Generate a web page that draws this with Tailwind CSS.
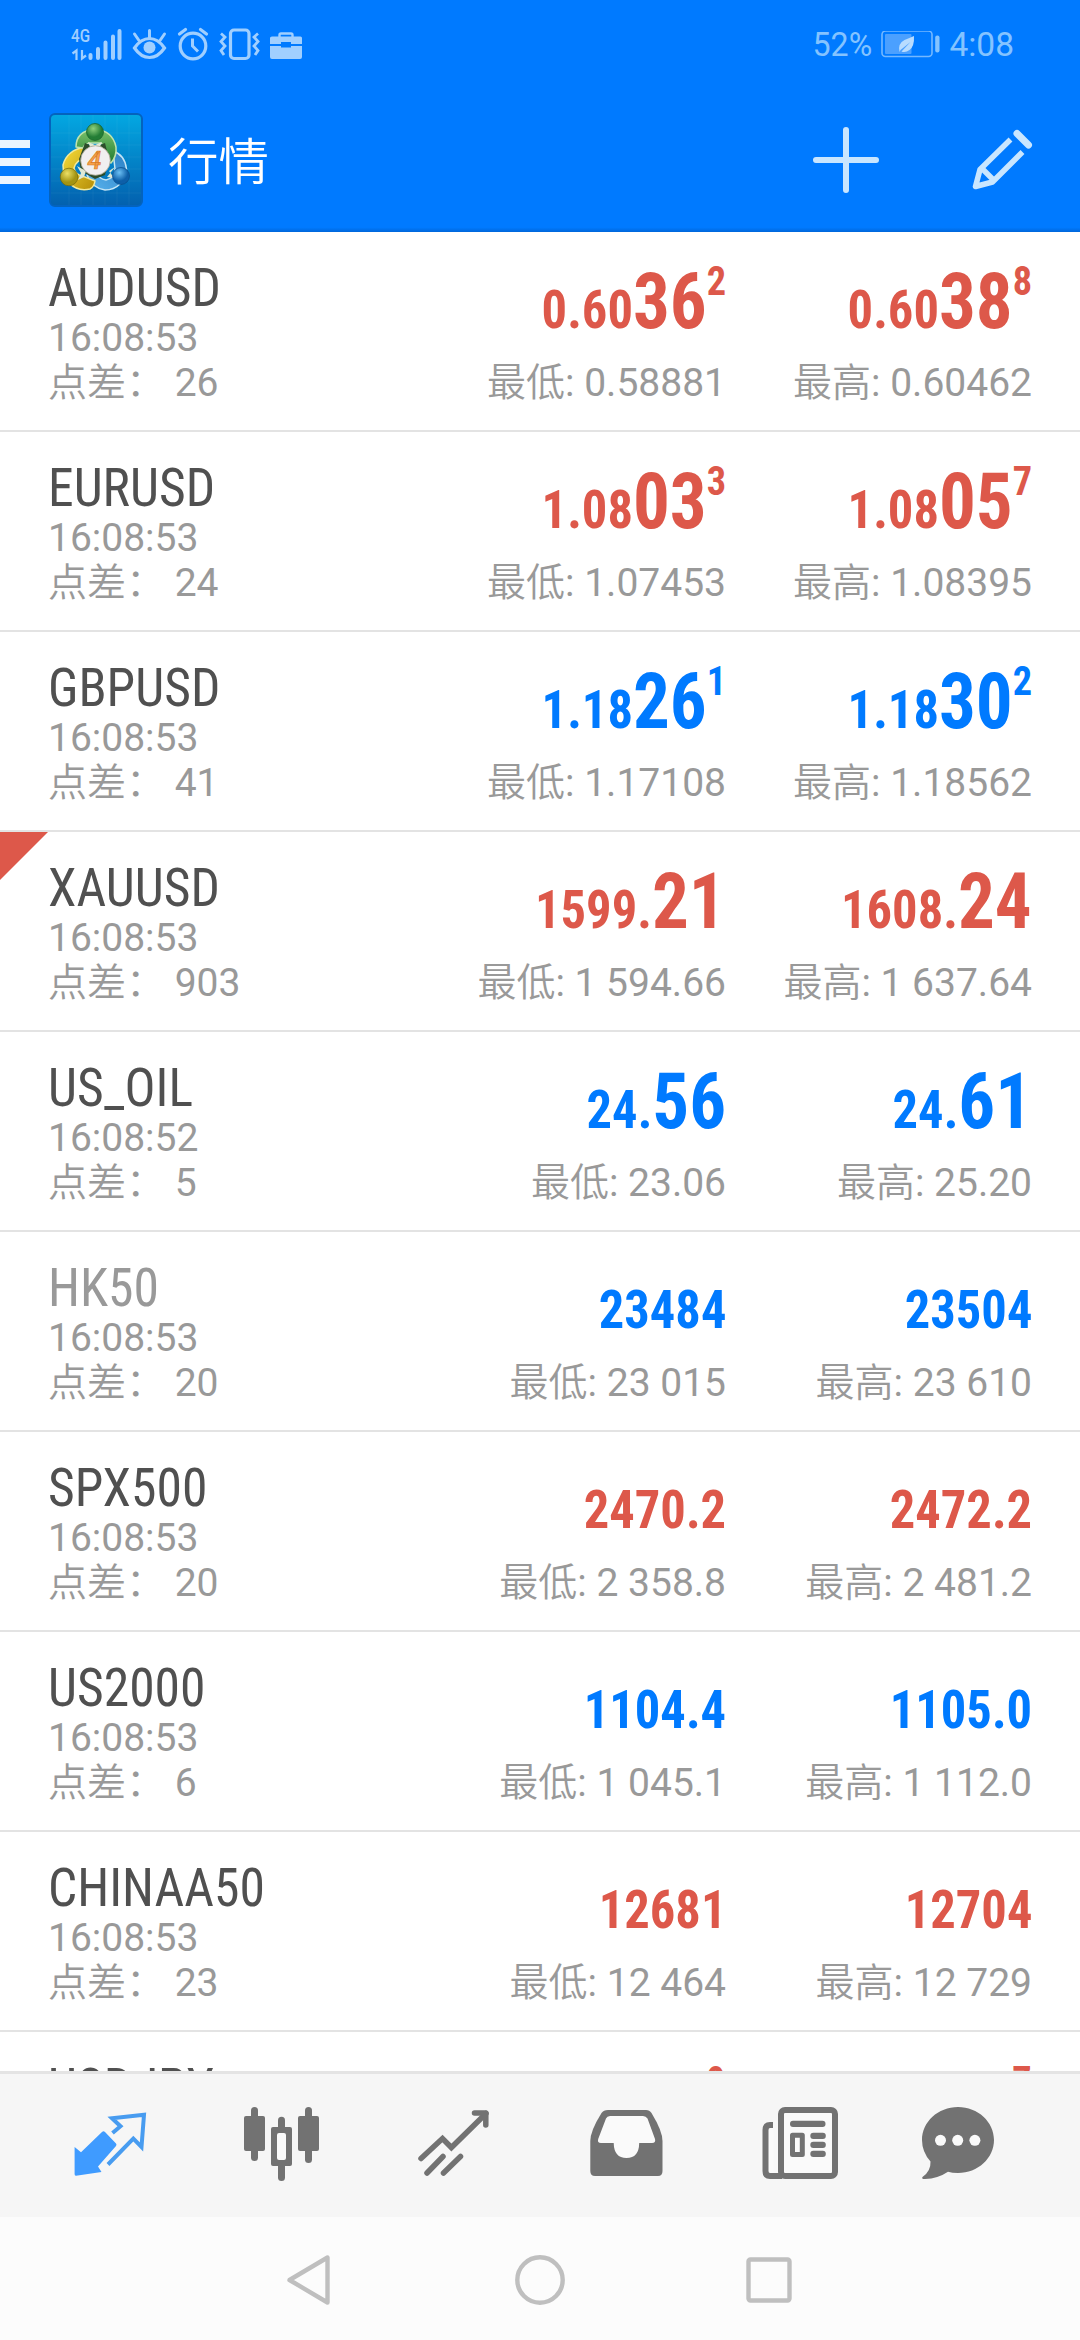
<!DOCTYPE html>
<html lang="zh-CN">
<head>
<meta charset="utf-8">
<meta name="viewport" content="width=1080">
<title>行情</title>
<script src="https://cdn.jsdelivr.net/npm/@tailwindcss/browser@4"></script>
</head>
<body class="flex h-[2340px] w-[1080px] flex-col overflow-hidden bg-white font-['Roboto','Noto_Sans_CJK_SC',sans-serif]">

<header class="flex h-[232px] shrink-0 flex-col bg-[#007aff] bg-linear-to-b from-[#007aff] from-98% to-[#0067da]">
  <div class="flex h-[90px] items-center justify-between pr-[66px] pl-[70px]">
    <svg class="h-[40px] w-[240px]" viewBox="70 25 240 40" fill="none" stroke="#a0cfff">
      <text x="71" y="42" font-family="Roboto" font-size="19" font-weight="500" fill="#a0cfff" stroke="none" textLength="19" lengthAdjust="spacingAndGlyphs">4G</text>
      <path d="M72.500 53.500L76.500 50.500V60M82 50V58.500L86 55.500" stroke-width="2.200"/>
      <path d="M90.500 55V58M98 49V58M105.500 42.500V58M113 36.500V58M119.500 31V58" stroke-width="4" stroke-linecap="round"/>
      <path d="M134.500 48Q141 38.500 149.500 38.500T164.500 48Q158 57.500 149.500 57.500T134.500 48Z" stroke-width="3.200"/>
      <circle cx="149.500" cy="47.500" r="6" fill="#a0cfff" stroke="none"/>
      <path d="M149.500 38V30.500M139 40.500L134.500 34M160 40.500L164.500 34" stroke-width="3" stroke-linecap="round"/>
      <circle cx="193" cy="46" r="12.800" stroke-width="3.200"/>
      <path d="M192.500 38.500V46L198 51.500" stroke-width="3"/>
      <path d="M179.500 34L185.500 29.500M206.500 34L200.500 29.500" stroke-width="3.200" stroke-linecap="round"/>
      <rect x="230.500" y="30" width="18.500" height="28.500" rx="3.500" stroke-width="3.200"/>
      <path d="M221 33.500L225 37L221 41.500L225 46L221 50.500L224 55M258 33.500L254 37L258 41.500L254 46L258 50.500L255 55" stroke-width="2.800"/>
      <path d="M272 36.500H300.500Q302 36.500 302 38V44H291V42H281V44H270V38Q270 36.500 272 36.500ZM270 46H281V47.500H291V46H302V57Q302 59 300 59H272Q270 59 270 57Z" fill="#a0cfff" stroke="none"/>
      <path d="M279.500 37V35Q279.500 33.500 281 33.500H291Q292.500 33.500 292.500 35V37" stroke-width="2.400"/>
    </svg>
    <div class="flex items-center gap-[9px] text-[33.500px] leading-none text-[#84c3ff]">
      <span class="origin-right scale-x-[.96]">52%</span>
      <svg class="h-[28px] w-[59px]" viewBox="880.500 31.500 59 28">
        <rect x="881.500" y="31.500" width="50" height="25.500" rx="3.500" fill="none" stroke="#74b8ff" stroke-width="1.600"/>
        <rect x="884.500" y="34.500" width="26.500" height="20" rx="1" fill="#4ba0ff"/>
        <rect x="934.700" y="36" width="4.300" height="17" rx="2" fill="#84c3ff"/>
        <path d="M899 52.500Q897 44 904 40.500Q909 38.500 913.500 36.500Q914 47 909 50.500Q905 53.500 901 52L910 42.500L900 50.500Z" fill="#b8dcff"/>
      </svg>
      <span>4:08</span>
    </div>
  </div>
  <div class="flex h-[140px] items-center pr-[46px]">
    <div class="flex w-[30px] flex-col gap-[10px] pt-1">
      <i class="h-2 bg-[#eaf5ff]"></i><i class="h-2 bg-[#eaf5ff]"></i><i class="h-2 bg-[#eaf5ff]"></i>
    </div>
    <svg class="ml-[19px] h-[94px] w-[94px]" viewBox="0 0 94 94">
      <defs>
        <linearGradient id="bg" x1="0" y1="0" x2="0" y2="1"><stop offset="0" stop-color="#03a8e2"/><stop offset="1" stop-color="#0360ae"/></linearGradient>
        <linearGradient id="gr" x1="0" y1="0" x2="0" y2="1"><stop offset="0" stop-color="#7cc46c"/><stop offset="1" stop-color="#1f7a30"/></linearGradient>
        <linearGradient id="ye" x1="0" y1="0" x2="1" y2="1"><stop offset="0" stop-color="#f6dd3a"/><stop offset="1" stop-color="#b58d08"/></linearGradient>
        <linearGradient id="bl" x1="1" y1="0" x2="0" y2="1"><stop offset="0" stop-color="#2b7fc4"/><stop offset="1" stop-color="#5ab4ee"/></linearGradient>
        <radialGradient id="hg" cx=".4" cy=".3"><stop offset="0" stop-color="#8ed07c"/><stop offset="1" stop-color="#237d35"/></radialGradient>
        <radialGradient id="hy" cx=".4" cy=".3"><stop offset="0" stop-color="#ece066"/><stop offset="1" stop-color="#a39412"/></radialGradient>
        <radialGradient id="hb" cx=".4" cy=".3"><stop offset="0" stop-color="#6cc0f4"/><stop offset="1" stop-color="#0d5fa8"/></radialGradient>
      </defs>
      <rect x="1" y="1" width="92" height="92" rx="5" fill="url(#bg)" stroke="#0463bd" stroke-width="2"/>
      <path d="M20 2V92M32 2V92M44 2V92M56 2V92M68 2V92M80 2V92M2 20H92M2 32H92M2 44H92M2 56H92M2 68H92M2 80H92" stroke="#fff" stroke-opacity=".05"/>
      <g stroke-linejoin="round">
      <path d="M64 38Q76 42 77.500 56Q77 64 71 71Q65 77 56 77Q43 75 38 62L46 58Q50 66 57 67Q66 65 66 56Z" fill="url(#bl)" stroke="#c3e4f5" stroke-width="1.500"/>
      <path d="M36 34Q18 37 14 52Q14 63 20 70Q29 79 41 76Q45 74 46 68L36 64Q26 62 25 55Q27 47 37 45Z" fill="url(#ye)" stroke="#f3e99a" stroke-width="1.500"/>
      <path d="M27 34Q27 18 46 16Q64 18 67 34Q68 43 62 50L55 46Q58 34 52 30H40Q35 32 34 35Z" fill="url(#gr)" stroke="#bfe3ae" stroke-width="1.500"/>
      <path d="M36 30L46 34L56 30L60 46L56 62L46 66L32 58L30 46Z" fill="#2c4d2a"/>
      <path d="M39 29L46 32L53 29L50 36H42ZM28 53L32 60L29 67L35 64L37 58ZM66 54L60 58L65 65L58 64Z" fill="#dfe9d5"/>
      </g>
      <circle cx="46" cy="19" r="8.500" fill="url(#hg)" stroke="#155f28" stroke-width=".7"/>
      <circle cx="20" cy="64" r="8.800" fill="url(#hy)" stroke="#72680d" stroke-width=".7"/>
      <circle cx="72" cy="63" r="8.500" fill="url(#hb)" stroke="#084a88" stroke-width=".7"/>
      <circle cx="46.500" cy="47.500" r="14.800" fill="#f1eff0" stroke="#a9a58f" stroke-width=".8"/>
      <text x="45.500" y="56" text-anchor="middle" font-family="Roboto" font-size="25" font-weight="500" font-style="italic" fill="#f6a24b" stroke="#d97a25" stroke-width=".7">4</text>
    </svg>
    <h1 class="ml-[25px] pt-[7px] text-[50.500px] leading-none font-[350] text-white">行情</h1>
    <svg class="ml-auto h-[70px] w-[224px]" viewBox="810 125 224 70" fill="none" stroke="#c9e6ff">
      <path d="M846 130V190M816 160H876" stroke-width="6" stroke-linecap="round"/>
      <g stroke-width="5.500">
        <path d="M1010.500 139.500L980 169.500L975.500 186.500L992.500 182L1022.500 152" stroke-linejoin="round"/>
        <path d="M981 167.500L995 181.500"/>
        <path d="M1017 133.500L1028.500 145" stroke-width="7" stroke-linecap="round"/>
      </g>
    </svg>
  </div>
</header>

<main id="quotes" class="h-[1839px] shrink-0 overflow-hidden"></main>

<nav class="flex h-[146px] shrink-0 items-start gap-[72px] border-t-[3px] border-[#e4e4e4] bg-[#f6f6f6] pt-[20px] pl-[60px]">
  <svg class="size-[100px] shrink-0" viewBox="0 0 100 100">
    <path d="M14.600 53L21 58.300L42 38Q43.500 36.500 45 38L56 49.500Q57 50.500 56 52L38 72.500L41.500 78L16 81.800Q14.600 82 14.600 80Z" fill="#3f9bff"/>
    <path d="M52.500 39L60.500 32.200L52 24.300L84 20.800L81.500 53L73.300 44.500L48 70.500" fill="none" stroke="#489cf0" stroke-width="4"/>
  </svg>
  <svg class="size-[100px] shrink-0" viewBox="0 0 100 100" fill="#727272">
    <rect x="12" y="22" width="21" height="35" rx="2"/><rect x="19" y="13" width="7" height="54" rx="3.500"/>
    <rect x="66" y="22" width="21" height="35" rx="2"/><rect x="73" y="13" width="7" height="56" rx="3.500"/>
    <rect x="46" y="22.700" width="7" height="64.300" rx="3.500"/><rect x="39" y="33" width="21" height="39" rx="2"/>
    <rect x="45" y="39" width="9" height="27" rx="2" fill="#fafafa"/>
  </svg>
  <svg class="size-[100px] shrink-0" viewBox="0 0 100 100" fill="none" stroke="#727272" stroke-width="5.500" stroke-linecap="round">
    <path d="M17 64.500L38.500 44.500L47.400 53.500L82 19.500" stroke-linejoin="miter"/>
    <path d="M70.500 19H81.800V31" stroke-linejoin="round"/>
    <path d="M23 79L39 62.500M39.500 79L56.500 62.500"/>
  </svg>
  <svg class="size-[100px] shrink-0" viewBox="0 0 100 100">
    <path d="M32 16H70Q73.500 16 75.500 19Q86.500 37 86.500 47V77Q86.500 82 82 82H19Q14.300 82 14.300 77V47Q14.300 37 25.500 19Q27.500 16 32 16Z" fill="#727272"/>
    <path d="M34 22H67Q70 22 71.500 24.500L79 45Q80 49 76 49H63.200Q63 64 50.500 64Q38 64 37.700 49H25Q21 49 22.200 45L30 24.500Q31 22 34 22Z" fill="#fafafa"/>
  </svg>
  <svg class="size-[100px] shrink-0" viewBox="0 0 100 100" fill="#727272">
    <path d="M25 31H22Q17.500 31 17.500 36V78Q17.500 82 22 82H34V31Z" fill="#fafafa"/>
    <path d="M25 31H22Q17.500 31 17.500 36V77Q17.500 82 22 82H34" fill="none" stroke="#727272" stroke-width="6"/>
    <rect x="25.500" y="27" width="5" height="52" fill="#f8f8f8"/>
    <rect x="33" y="16" width="54" height="66" rx="4" fill="#fafafa" stroke="#727272" stroke-width="6"/>
    <rect x="42" y="26.700" width="35.500" height="6.300" rx="3"/>
    <rect x="44.500" y="41.200" width="9.800" height="19.300" fill="none" stroke="#727272" stroke-width="5" stroke-linejoin="round"/>
    <rect x="62.300" y="38.700" width="15.500" height="6.300" rx="3"/><rect x="62.300" y="47.700" width="15.500" height="6.300" rx="3"/><rect x="62.300" y="56.700" width="15.500" height="6.300" rx="3"/>
  </svg>
  <svg class="size-[100px] shrink-0" viewBox="0 0 100 100">
    <path d="M38 13C58 13 74 28 74 46S58 79 38 79Q32 79 28 77.700Q18 84.500 5 85Q1 85 2.500 83Q11 77 10.500 67.500Q2 58 2 46C2 28 18 13 38 13Z" fill="#727272"/>
    <g fill="#fafafa"><circle cx="20.500" cy="46.300" r="5.500"/><circle cx="37.700" cy="46.300" r="5.500"/><circle cx="54.900" cy="46.300" r="5.500"/></g>
  </svg>
</nav>

<footer class="flex h-[123px] shrink-0 items-center justify-center gap-[170px] bg-[#fcfcfc]">
  <svg class="size-[60px]" viewBox="0 0 60 60" fill="none" stroke="#bfbfbf" stroke-width="4.400" stroke-linejoin="round"><path d="M9.500 31L47.500 8.500V53.500Z"/></svg>
  <svg class="size-[60px]" viewBox="0 0 60 60" fill="none" stroke="#bfbfbf" stroke-width="4.400"><circle cx="30" cy="31" r="22.700"/></svg>
  <svg class="size-[60px]" viewBox="0 0 60 60" fill="none" stroke="#bfbfbf" stroke-width="4.400"><rect x="8.500" y="10.500" width="41" height="41" rx="2"/></svg>
</footer>

<script>
  // symbol, time, spread, bid [small, big, sup], low, ask [small, big, sup], high, colour, flags
  const rows = [
    ['AUDUSD','16:08:53','26',['0.60','36','2'],'0.58881',['0.60','38','8'],'0.60462','r'],
    ['EURUSD','16:08:53','24',['1.08','03','3'],'1.07453',['1.08','05','7'],'1.08395','r'],
    ['GBPUSD','16:08:53','41',['1.18','26','1'],'1.17108',['1.18','30','2'],'1.18562','b'],
    ['XAUUSD','16:08:53','903',['1599.','21',''],'1 594.66',['1608.','24',''],'1 637.64','r','mark'],
    ['US_OIL','16:08:52','5',['24.','56',''],'23.06',['24.','61',''],'25.20','b'],
    ['HK50','16:08:53','20',['23484','',''],'23 015',['23504','',''],'23 610','b','dim'],
    ['SPX500','16:08:53','20',['2470.2','',''],'2 358.8',['2472.2','',''],'2 481.2','r'],
    ['US2000','16:08:53','6',['1104.4','',''],'1 045.1',['1105.0','',''],'1 112.0','b'],
    ['CHINAA50','16:08:53','23',['12681','',''],'12 464',['12704','',''],'12 729','r'],
    ['USDJPY','','',['','','9'],'',['','','7'],'','r'],
  ];
  const price = ([s, b, u], c) => `
    <div class="flex h-[90px] origin-right scale-x-[.936] items-baseline font-bold font-stretch-condensed ${c === 'r' ? 'text-[#dd584a]' : 'text-[#007aff]'}">
      <span class="text-[54px] leading-[90px]">${s}</span><span class="text-[78px] leading-[90px]">${b || '&#8203;'}</span>${u ? `<span class="-translate-y-[33px] text-[41px] leading-[40px]">${u}</span>` : ''}
    </div>`;
  const cell = (p, label, v, c) => `
    <div class="flex w-[306px] flex-col items-end pt-[24.5px]">
      ${price(p, c)}
      ${v ? `<div class="mt-[11px] text-[39px] leading-[50px] whitespace-pre text-[#999]"><span class="font-[350]">${label}</span>: ${v}</div>` : ''}
    </div>`;
  document.getElementById('quotes').innerHTML = rows.map(([n, t, s, bid, lo, ask, hi, c, f]) => `
    <section class="relative flex h-[200px] justify-end border-b-2 border-[#e3e3e3] pr-[48px]">
      ${f === 'mark' ? '<svg class="absolute top-0 left-0 size-[48px]" viewBox="0 0 48 48"><path d="M0 0H48L0 48Z" fill="#dd584a"/></svg>' : ''}
      <div class="flex flex-1 flex-col pt-[26px] pl-[48px] text-[39px] text-[#999]">
        <div class="h-[65px] origin-left scale-x-[.955] text-[54px] leading-[60px] font-stretch-condensed ${f === 'dim' ? 'text-[#999]' : 'text-[#505050]'}"><span>${n}</span></div>
        ${t ? `<div class="h-[45px] leading-[30px]">${t}</div>
        <div class="leading-[30px] whitespace-pre"><span class="font-[350]">点差：</span> ${s}</div>` : ''}
      </div>
      ${cell(bid, '最低', lo, c)}
      ${cell(ask, '最高', hi, c)}
    </section>`).join('');
</script>
</body>
</html>
